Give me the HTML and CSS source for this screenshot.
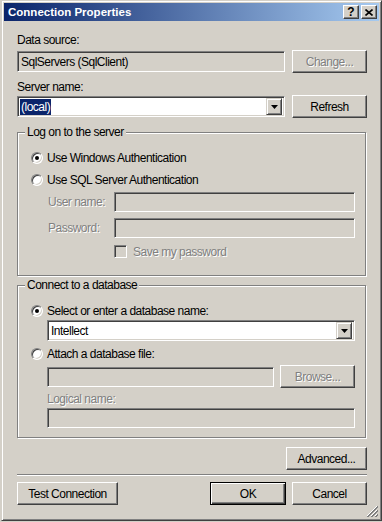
FILE: index.html
```html
<!DOCTYPE html>
<html lang="en">
<head>
    <meta charset="UTF-8">
    <title>Connection Properties</title>
    <link rel="stylesheet" href="styles.css">
</head>
<body>
    <div class="window">
        <div class="titlebar">
            <span class="title">Connection Properties</span>
            <div class="title-buttons">
                <span class="tbtn">?</span>
                <span class="tbtn">
                    <svg width="8" height="7" viewBox="0 0 8 7"><path d="M0.5 0.5 L7.5 6.5 M7.5 0.5 L0.5 6.5" stroke="#000" stroke-width="1.6"/></svg>
                </span>
            </div>
        </div>
        <div class="content">
            <div class="label">Data source:</div>
            <div class="row">
                <div class="field off wide">SqlServers (SqlClient)</div>
                <div class="btn disabled">Change...</div>
            </div>
            <div class="label label-server">Server name:</div>
            <div class="row">
                <div class="field combo wide">
                    <span class="selected">(local)</span>
                    <span class="drop"><svg width="7" height="4" viewBox="0 0 7 4"><polygon points="0,0 7,0 3.5,4" fill="#000"/></svg></span>
                </div>
                <div class="btn">Refresh</div>
            </div>

            <div class="group group-logon">
                <span class="legend">Log on to the server</span>
                <div class="radio-row"><span class="radio checked"></span>Use Windows Authentication</div>
                <div class="radio-row second"><span class="radio"></span>Use SQL Server Authentication</div>
                <div class="cred-row first">
                    <span class="cred-label disabled">User name:</span>
                    <div class="field off small"></div>
                </div>
                <div class="cred-row">
                    <span class="cred-label disabled">Password:</span>
                    <div class="field off small"></div>
                </div>
                <div class="check-row">
                    <span class="check"></span>
                    <span class="disabled">Save my password</span>
                </div>
            </div>

            <div class="group group-db">
                <span class="legend">Connect to a database</span>
                <div class="radio-row"><span class="radio checked"></span>Select or enter a database name:</div>
                <div class="indent">
                    <div class="field combo">
                        <span class="value">Intellect</span>
                        <span class="drop"><svg width="7" height="4" viewBox="0 0 7 4"><polygon points="0,0 7,0 3.5,4" fill="#000"/></svg></span>
                    </div>
                </div>
                <div class="radio-row attach"><span class="radio"></span>Attach a database file:</div>
                <div class="indent">
                    <div class="file-row">
                        <div class="field off small file"></div>
                        <div class="btn disabled">Browse...</div>
                    </div>
                    <div class="label disabled logical">Logical name:</div>
                    <div class="field off small"></div>
                </div>
            </div>

            <div class="advanced-row">
                <div class="btn advanced">Advanced...</div>
            </div>
            <div class="separator"></div>
            <div class="footer">
                <div class="btn test">Test Connection</div>
                <div class="footer-right">
                    <div class="btn default ok">OK</div>
                    <div class="btn">Cancel</div>
                </div>
            </div>
        </div>
        <svg class="grip" width="12" height="12" viewBox="0 0 12 12">
            <path d="M11 1 L1 11 M11 5 L5 11 M11 9 L9 11" stroke="#fff" stroke-width="1"/>
            <path d="M12 1 L1 12 M12 2 L2 12 M12 5 L5 12 M12 6 L6 12 M12 9 L9 12 M12 10 L10 12" stroke="#808080" stroke-width="1"/>
        </svg>
    </div>
</body>
</html>
```

FILE: styles.css
```css
body {
    margin: 0;
    background: #d4d0c8;
    font-family: "Liberation Sans", Arial, sans-serif;
    font-size: 12px;
    letter-spacing: -0.5px;
    color: #000;
}
.window {
    position: relative;
    margin-left: 1px;
    width: 381px;
    height: 521px;
    box-sizing: border-box;
    padding: 2px;
    border: 1px solid;
    border-color: #d4d0c8 #404040 #404040 #d4d0c8;
    box-shadow: inset 1px 1px #fff, inset -1px -1px #808080;
}
.titlebar {
    height: 18px;
    display: flex;
    align-items: center;
    justify-content: space-between;
    padding: 0 2px 0 4px;
    background: linear-gradient(to right, #0a246a, #a6caf0);
}
.title {
    color: #fff;
    font-weight: bold;
    font-size: 11.5px;
    letter-spacing: 0;
}
.title-buttons {
    display: flex;
    gap: 2px;
}
.tbtn {
    box-sizing: border-box;
    width: 16px;
    height: 14px;
    display: flex;
    align-items: center;
    justify-content: center;
    background: #d4d0c8;
    border: 1px solid;
    border-color: #fff #404040 #404040 #fff;
    box-shadow: inset -1px -1px #808080;
    font-weight: bold;
    font-size: 12px;
    letter-spacing: 0;
    line-height: 1;
}
.content {
    padding: 0 12px 0 13px;
}
.label {
    line-height: 15px;
    margin-top: 12px;
}
.label-server {
    margin-top: 7px;
}
.row {
    display: flex;
    align-items: center;
    justify-content: space-between;
    margin-top: 2px;
}
.label-server + .row {
    margin-top: 0;
}
.field {
    box-sizing: border-box;
    height: 21px;
    display: flex;
    align-items: center;
    padding-left: 3px;
    background: #fff;
    border: 1px solid;
    border-color: #808080 #fff #fff #808080;
    box-shadow: inset 1px 1px #404040, inset -1px -1px #d4d0c8;
    white-space: nowrap;
}
.field.off {
    background: #d4d0c8;
}
.field.small {
    height: 20px;
}
.field.wide {
    width: 268px;
}
.combo {
    padding: 2px;
}
.combo .value {
    padding-left: 1px;
}
.selected {
    background: #0a246a;
    color: #fff;
    line-height: 16px;
    padding: 0 1px;
}
.drop {
    box-sizing: border-box;
    width: 16px;
    height: 17px;
    margin-left: auto;
    display: flex;
    align-items: center;
    justify-content: center;
    background: #d4d0c8;
    border: 1px solid;
    border-color: #d4d0c8 #404040 #404040 #d4d0c8;
    box-shadow: inset 1px 1px #fff, inset -1px -1px #808080;
}
.btn {
    box-sizing: border-box;
    width: 75px;
    height: 23px;
    display: flex;
    align-items: center;
    justify-content: center;
    background: #d4d0c8;
    border: 1px solid;
    border-color: #fff #404040 #404040 #fff;
    box-shadow: inset -1px -1px #808080, inset 1px 1px #d4d0c8;
    white-space: nowrap;
}
.btn.default {
    border-color: #000;
    box-shadow: inset 1px 1px #fff, inset -1px -1px #404040, inset -2px -2px #808080;
}
.disabled {
    color: #808080;
    text-shadow: 1px 1px #fff;
}
.group {
    position: relative;
    width: 349px;
    box-sizing: border-box;
    border: 1px solid #808080;
    box-shadow: 1px 1px #fff, inset 1px 1px #fff;
    padding: 17px 10px 0 13px;
}
.group-logon {
    margin-top: 14px;
    height: 144px;
}
.group-db {
    margin-top: 9px;
    height: 153px;
}
.legend {
    position: absolute;
    top: -8px;
    left: 7px;
    padding: 0 2px;
    background: #d4d0c8;
    line-height: 15px;
}
.radio-row {
    display: flex;
    align-items: center;
    gap: 4px;
    height: 16px;
}
.radio-row.second {
    margin-top: 6px;
}
.radio-row.attach {
    margin-top: 5px;
}
.radio {
    position: relative;
    box-sizing: border-box;
    width: 12px;
    height: 12px;
    border-radius: 50%;
    background: #fff;
    border: 1px solid;
    border-color: #808080 #fff #fff #808080;
    box-shadow: inset 1px 1px #404040, inset -1px -1px #d4d0c8;
}
.radio.checked::after {
    content: "";
    position: absolute;
    left: 3px;
    top: 3px;
    width: 4px;
    height: 4px;
    border-radius: 50%;
    background: #000;
}
.cred-row {
    display: flex;
    align-items: center;
    margin-top: 6px;
    padding-left: 17px;
}
.cred-row.first {
    margin-top: 4px;
}
.cred-label {
    width: 66px;
    flex-shrink: 0;
    white-space: nowrap;
}
.cred-row .field {
    flex-grow: 1;
}
.check-row {
    display: flex;
    align-items: center;
    gap: 6px;
    margin-top: 7px;
    padding-left: 83px;
    height: 13px;
}
.check {
    box-sizing: border-box;
    width: 13px;
    height: 13px;
    background: #d4d0c8;
    border: 1px solid;
    border-color: #808080 #fff #fff #808080;
    box-shadow: inset 1px 1px #404040, inset -1px -1px #d4d0c8;
}
.indent {
    margin-left: 16px;
}
.indent .combo {
    margin-top: 1px;
}
.file-row {
    display: flex;
    align-items: center;
    justify-content: space-between;
    margin-top: 3px;
}
.field.file {
    width: 227px;
}
.logical {
    margin-top: 4px;
    margin-bottom: 1px;
}
.advanced-row {
    display: flex;
    justify-content: flex-end;
    margin-top: 9px;
}
.btn.advanced {
    width: 81px;
}
.separator {
    margin-top: 4px;
    height: 1px;
    background: #808080;
    border-bottom: 1px solid #fff;
}
.footer {
    display: flex;
    justify-content: space-between;
    margin-top: 6px;
}
.btn.test {
    width: 101px;
}
.footer-right {
    display: flex;
    gap: 6px;
}
.btn.ok {
    width: 76px;
}
.grip {
    position: absolute;
    right: 3px;
    bottom: 3px;
}
```
